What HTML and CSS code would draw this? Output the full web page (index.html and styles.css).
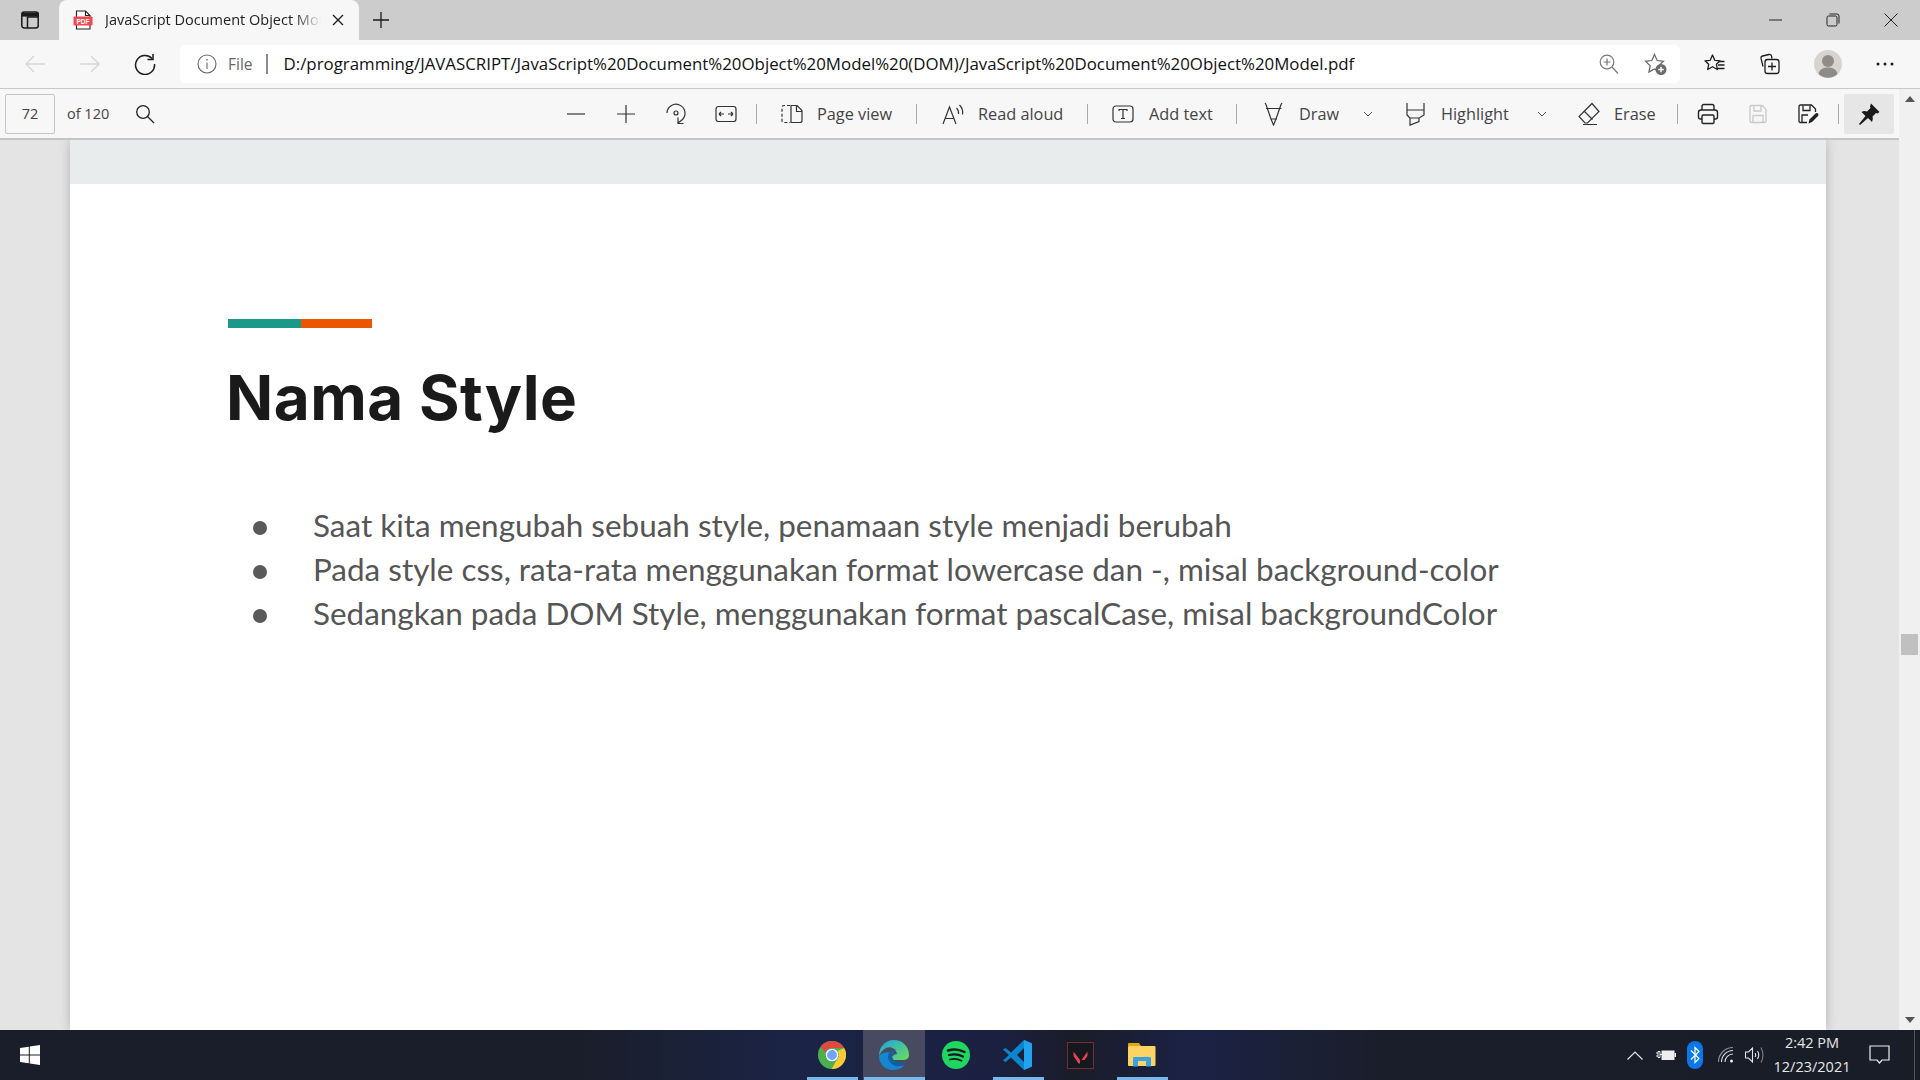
FILE: index.html
```html
<!DOCTYPE html>
<html lang="en">
<head>
<meta charset="utf-8">
<title>JavaScript Document Object Model</title>
<link rel="stylesheet" href="styles.css">
</head>
<body>
<div class="browser">
  <header class="tabstrip">
    <div class="tabs-btn">
      <svg width="20" height="20" viewBox="0 0 20 20" fill="none" stroke="#1a1a1a" stroke-width="1.5"><rect x="1.8" y="2" width="16.4" height="16" rx="2.5"/><path d="M2 3.5h16V7H7.5v11" /><path d="M2 4h16v2.6H2z" fill="#1a1a1a" stroke="none"/></svg>
    </div>
    <div class="tab">
      <svg class="tab-fav" width="20" height="20" viewBox="0 0 20 20"><path d="M3.5 1h9l4.500 4.500V19h-13.500z" fill="#fff" stroke="#222" stroke-width="1.100"/><path d="M12.500 1v4.500H17" fill="none" stroke="#222" stroke-width="1.100"/><rect x="0.500" y="6.500" width="19" height="9" rx="1" fill="#f4474f"/><text class="fav-text" x="10" y="13.500">PDF</text></svg>
      <span class="tab-title">JavaScript Document Object Model</span>
      <svg class="tab-close" width="12" height="12" viewBox="0 0 12 12" stroke="#1a1a1a" stroke-width="1.300"><path d="M1 1l10 10M11 1L1 11"/></svg>
    </div>
    <div class="new-tab">
      <svg width="18" height="18" viewBox="0 0 18 18" stroke="#1a1a1a" stroke-width="1.300"><path d="M9 1v16M1 9h16"/></svg>
    </div>
    <div class="window-controls">
      <button class="win-btn"><svg width="14" height="14" viewBox="0 0 14 14" stroke="#222" stroke-width="1"><path d="M0 7h13"/></svg></button>
      <button class="win-btn"><svg width="14" height="14" viewBox="0 0 14 14" fill="none" stroke="#222" stroke-width="1"><rect x="1" y="3" width="10" height="10" rx="1.500"/><path d="M3.500 1H11q2 0 2 2v7.500"/></svg></button>
      <button class="win-btn"><svg width="14" height="14" viewBox="0 0 14 14" stroke="#222" stroke-width="1"><path d="M.5.500l13 13M13.500.500l-13 13"/></svg></button>
    </div>
  </header>

  <nav class="addressbar">
    <button class="nav-btn nav-back"><svg width="22" height="20" viewBox="0 0 22 20" fill="none" stroke="#d6d6d6" stroke-width="1.500"><path d="M21 10H2M10 2l-8 8 8 8"/></svg></button>
    <button class="nav-btn nav-forward"><svg width="22" height="20" viewBox="0 0 22 20" fill="none" stroke="#d6d6d6" stroke-width="1.500"><path d="M1 10h19M12 2l8 8-8 8"/></svg></button>
    <button class="nav-btn nav-reload"><svg width="22" height="22" viewBox="0 0 22 22" fill="none" stroke="#1c1c1c" stroke-width="1.500"><path d="M18 5.500A9.500 9.500 0 1 0 20.500 11"/><path d="M19 1v5.500h-5.500"/></svg></button>
    <div class="omnibox">
      <svg class="info" width="20" height="20" viewBox="0 0 20 20" fill="none" stroke="#666" stroke-width="1.100"><circle cx="10" cy="10" r="9"/><path d="M10 8.500V15"/><path d="M10 5v1.500" stroke-width="1.400"/></svg>
      <span class="scheme">File</span>
      <span class="scheme-sep"></span>
      <span class="url">D:/programming/JAVASCRIPT/JavaScript%20Document%20Object%20Model%20(DOM)/JavaScript%20Document%20Object%20Model.pdf</span>
      <svg class="omni-zoom" width="20" height="20" viewBox="0 0 20 20" fill="none" stroke="#777" stroke-width="1.200"><circle cx="8" cy="8" r="6.800"/><path d="M13 13l6 6.500M8 4.500v7M4.500 8h7"/></svg>
      <svg class="omni-fav" width="24" height="24" viewBox="0 0 24 24"><path d="M10.500 2.500l2.700 6 6.300.8-4.700 4.400 1.300 6.300-5.600-3.100-5.600 3.100 1.300-6.300L1.500 9.300l6.300-.8z" fill="none" stroke="#666" stroke-width="1.200"/><circle cx="17" cy="17.500" r="5.500" fill="#6b6b6b"/><path d="M17 14.800v5.400M14.300 17.500h5.400" stroke="#fff" stroke-width="1.400"/></svg>
    </div>
    <div class="browser-actions">
      <button class="act-btn"><svg width="22" height="22" viewBox="0 0 22 22" fill="none" stroke="#1c1c1c" stroke-width="1.300"><path d="M8.500 2l2.300 5.300 5.200.5-3.600 3.500 1 5.200-4.900-2.800L3.700 16.500l1-5.200L1 7.800l5.200-.5z" stroke-linejoin="round"/><path d="M15 8.500h5.500M14 12h6.500M14 15.500h6.500"/></svg></button>
      <button class="act-btn"><svg width="22" height="22" viewBox="0 0 22 22" fill="none" stroke="#1c1c1c" stroke-width="1.300"><path d="M4 13.500 2 5.200Q1.700 3.500 3.500 3l6.500-1.500Q12 1.200 12.500 3l.5 2.500"/><rect x="6" y="6.500" width="14" height="14" rx="2.500"/><path d="M13 9.500v8M9 13.500h8"/></svg></button>
      <div class="avatar"><svg width="28" height="28" viewBox="0 0 28 28"><circle cx="14" cy="14" r="14" fill="#d7d4d0"/><circle cx="14" cy="11" r="6" fill="#8f8b87"/><path d="M4.500 24c1-5 5-6.500 9.500-6.500s8.500 1.500 9.500 6.500a14 14 0 0 1-19 0z" fill="#8f8b87"/></svg></div>
      <button class="act-btn act-more"><svg width="18" height="4" viewBox="0 0 18 4" fill="#1c1c1c"><circle cx="2" cy="2" r="1.500"/><circle cx="9" cy="2" r="1.500"/><circle cx="16" cy="2" r="1.500"/></svg></button>
    </div>
  </nav>

  <div class="viewer">
    <div class="viewer-main">
      <div class="pdf-toolbar">
        <div class="page-box">72</div>
        <span class="page-of">of 120</span>
        <button class="ico-btn ico-search"><svg width="20" height="20" viewBox="0 0 20 20" fill="none" stroke="#222" stroke-width="1.300"><circle cx="8" cy="8" r="6.300"/><path d="M12.500 12.500l6.500 6.500"/></svg></button>

        <button class="ico-btn ico-minus"><svg width="20" height="20" viewBox="0 0 20 20" stroke="#333" stroke-width="1.200"><path d="M1 10h18"/></svg></button>
        <button class="ico-btn"><svg width="20" height="20" viewBox="0 0 20 20" stroke="#333" stroke-width="1.200"><path d="M1 10h18M10 1v18"/></svg></button>
        <button class="ico-btn ico-rotate"><svg width="22" height="24" viewBox="0 0 22 24" fill="none" stroke="#333" stroke-width="1.200"><path d="M2 11a9 9 0 1 1 15.500 6.500L13 21"/><path d="M13 15.500V21.500H18.500"/><circle cx="11" cy="11" r="2"/></svg></button>
        <button class="ico-btn"><svg width="22" height="18" viewBox="0 0 22 18" fill="none" stroke="#333" stroke-width="1.200"><rect x="1" y="1.500" width="20" height="15" rx="2.500"/><path d="M4 9h5M4 9l2-2M4 9l2 2M18 9h-5M18 9l-2-2M18 9l-2 2"/></svg></button>
        <span class="sep sep-a"></span>

        <div class="tool tool-page">
          <svg width="22" height="20" viewBox="0 0 22 20" fill="none" stroke="#333" stroke-width="1.200"><path d="M9 1.500H3q-2 0-2 2v13q0 2 2 2h6" stroke-dasharray="3 2"/><path d="M10 1v18M10 1.500h6l5 5v10q0 2-2 2h-9"/><path d="M15.500 1.500v6h5.500"/></svg>
          <span>Page view</span>
        </div>
        <span class="sep"></span>
        <div class="tool tool-read">
          <svg width="24" height="22" viewBox="0 0 24 22" fill="none" stroke="#333" stroke-width="1.200"><path d="M1 21 7.500 4 14 21M3.200 15.500h8.600"/><path d="M14.500 5q2.500 2.500 2 6M17.500 2q4 4 3 9.500"/></svg>
          <span>Read aloud</span>
        </div>
        <span class="sep"></span>
        <div class="tool tool-add">
          <svg width="22" height="20" viewBox="0 0 22 20" fill="none" stroke="#333" stroke-width="1.200"><rect x="1" y="2" width="20" height="16" rx="3"/><path d="M7 7V5.500h8V7M11 5.500v9M9 14.500h4"/></svg>
          <span>Add text</span>
        </div>
        <span class="sep"></span>
        <div class="tool tool-draw">
          <svg width="20" height="24" viewBox="0 0 20 24" fill="none" stroke="#333" stroke-width="1.200"><path d="M1 1l1 1.500 5 14.500 2.500 6 2.500-6L17 2.500 18 1M2 6.500h15.500M7 17h6"/></svg>
          <span>Draw</span>
        </div>
        <svg class="chev" width="10" height="6" viewBox="0 0 10 6" fill="none" stroke="#555"><path d="M1 1l4 4 4-4"/></svg>
        <div class="tool tool-high">
          <svg width="20" height="24" viewBox="0 0 20 24" fill="none" stroke="#333" stroke-width="1.200"><path d="M1 1v7h17V1M1 8v5l3 3v7l9-3.500V16l5-3V8M4 16h9"/></svg>
          <span>Highlight</span>
        </div>
        <svg class="chev" width="10" height="6" viewBox="0 0 10 6" fill="none" stroke="#555"><path d="M1 1l4 4 4-4"/></svg>
        <div class="tool tool-erase">
          <svg width="22" height="24" viewBox="0 0 22 24" fill="none" stroke="#333" stroke-width="1.200"><path d="M14 1.500l7 8L9.500 21H7L1 14.500z"/><path d="M6 9l8.500 8.500M5 22.500h14"/></svg>
          <span>Erase</span>
        </div>
        <span class="sep sep-b"></span>
        <button class="ico-btn"><svg width="22" height="22" viewBox="0 0 22 22" fill="none" stroke="#222" stroke-width="1.400"><path d="M5 7V3.500Q5 1.500 7 1.500h8q2 0 2 2V7"/><path d="M5 16H3.500Q1.500 16 1.500 14V9.500Q1.500 7 4 7h14q2.500 0 2.500 2.500V14q0 2-2 2H17"/><rect x="5" y="12" width="12" height="8.500" rx="1.200"/></svg></button>
        <button class="ico-btn"><svg width="20" height="20" viewBox="0 0 20 20" fill="none" stroke="#c9c9c9" stroke-width="1.300"><path d="M3 1.500h11l4 4V17q0 1.500-1.500 1.500h-13Q2 18.500 2 17V3q0-1.500 1-1.500z"/><path d="M6 2v5h7V2M5 18.500v-7h10v7"/></svg></button>
        <button class="ico-btn"><svg width="22" height="22" viewBox="0 0 22 22" fill="none" stroke="#222" stroke-width="1.300"><path d="M10 19.500H3.500Q2 19.500 2 18V3.500Q2 2 3.500 2h11l4 4v3"/><path d="M6 2.500v5h7v-5M5 19v-7h6"/><path d="M11.500 20.500l1-4 6-6q1.500-1 2.500 0t0 2.500l-6 6z" fill="#222" stroke="none"/></svg></button>
        <span class="sep sep-c"></span>
        <button class="pin-btn"><svg width="22" height="22" viewBox="0 0 22 22" fill="#1a1a1a"><path d="M13 .5l8.500 8.500-2 1.500-1.500-.5-3.500 3.500q1 3-.5 5.500l-4-4-1-1 1 1-8 7-1-1 6.500-8-4-4q2.500-1.500 5.500-.5l3.500-3.500-.5-1.500z"/></svg></button>
      </div>

      <main class="doc">
        <article class="page">
          <div class="page-band"></div>
          <div class="page-body">
            <div class="accent"><span class="accent-teal"></span><span class="accent-orange"></span></div>
            <h1 class="title">Nama Style</h1>
            <ul class="points">
              <li>Saat kita mengubah sebuah style, penamaan style menjadi berubah</li>
              <li>Pada style css, rata-rata menggunakan format lowercase dan -, misal background-color</li>
              <li>Sedangkan pada DOM Style, menggunakan format pascalCase, misal backgroundColor</li>
            </ul>
          </div>
        </article>
      </main>
    </div>
    <aside class="scrollbar">
      <svg class="arrow" width="10" height="6" viewBox="0 0 10 6" fill="#555"><path d="M5 0l5 6H0z"/></svg>
      <div class="thumb"></div>
      <svg class="arrow arrow-down" width="10" height="6" viewBox="0 0 10 6" fill="#555"><path d="M5 6l5-6H0z"/></svg>
    </aside>
  </div>

  <footer class="taskbar">
    <svg class="start" width="20" height="20" viewBox="0 0 20 20" fill="#fff"><path d="M0 3l8.800-1.200v7.700H0zM9.800 1.600 20 0v9.500H9.800zM0 10.500h8.800v7.700L0 17zM9.800 10.500H20V20L9.800 18.400z"/></svg>
    <div class="apps">
      <div class="app app-open">
        <svg width="28" height="28" viewBox="0 0 28 28"><circle cx="14" cy="14" r="14" fill="#4caf50"/><path d="M14 0a14 14 0 0 1 12.100 7H14a7 7 0 0 0-6.600 4.700L2.600 5.500A14 14 0 0 1 14 0z" fill="#dd4b3e"/><path d="M26.100 7A14 14 0 0 1 13.500 28l6.300-10.500A7 7 0 0 0 19.500 10z" fill="#fcc934"/><circle cx="14" cy="14" r="6.300" fill="#fff"/><circle cx="14" cy="14" r="4.900" fill="#6ea6f5"/></svg>
      </div>
      <div class="app app-open app-active">
        <svg width="30" height="30" viewBox="0 0 30 30"><defs><linearGradient id="edgeA" x1="0" y1="0" x2="1" y2="1"><stop offset="0" stop-color="#1aa6e0"/><stop offset="1" stop-color="#6fdc5a"/></linearGradient></defs><path d="M15 0C23 0 30 6 30 15c0 4-3 5-6.500 5H12c0-3 3-6 6-6-1-5-6-8-11-6C3 10 1 13 0 16 0 7 6 0 15 0z" fill="url(#edgeA)"/><path d="M0 16C0 24 6 30 14 30c4 0 8-1 12-5-4 1.500-10 2-13-2-3-4-2-8 2-10-8-2-14 1-15 3z" fill="#1587cf"/><path d="M9 17c0-4 3-8 9-7.500 0 0-4 1-5 4.500-1 5 4 9 9 8.500 2 0 3-.5 4-1-3 5-8 6-12 3.500-3-2-5-5-5-8z" fill="#125fa8"/></svg>
      </div>
      <div class="app">
        <svg width="28" height="28" viewBox="0 0 28 28" fill="none"><circle cx="14" cy="14" r="14" fill="#1ed760"/><path d="M6 9.500q8.500-2.500 16.500 1.500" stroke="#14181f" stroke-width="2.500" stroke-linecap="round"/><path d="M7 14q7.500-2 14 1.500" stroke="#14181f" stroke-width="2.200" stroke-linecap="round"/><path d="M8 18.500q6-1.500 11.500 1.200" stroke="#14181f" stroke-width="1.800" stroke-linecap="round"/></svg>
      </div>
      <div class="app app-open">
        <svg width="30" height="30" viewBox="0 0 30 30"><path d="M21 0l8 3.500v23L21 30 8 17.500 2.500 22 0 20.500 6 15 0 9.500 2.500 8 8 12.500z M21 8l-7 7 7 7z" fill="#0a85d0" fill-rule="evenodd"/><path d="M21 0l8 3.500v23L21 30z" fill="#21a3ee"/></svg>
      </div>
      <div class="app">
        <svg width="27" height="27" viewBox="0 0 27 27"><rect x=".5" y=".5" width="26" height="26" fill="#14181f" stroke="#7c2a38"/><path d="M6.500 9.500l6.500 8.500v3.500h-1.500L6.500 14z M20.500 9.500v4.500l-3 4h-3z" fill="#e74353"/></svg>
      </div>
      <div class="app app-open">
        <svg width="28" height="24" viewBox="0 0 28 24"><path d="M0 1q0-1 1-1h10l2 3h-13z" fill="#e2a80e"/><rect y="3" width="27.500" height="20" rx="1" fill="#fdd462"/><path d="M5 23.500V15q0-1 1-1h16q1 0 1 1v8.500h-5V18H10v5.500z" fill="#39a1e4"/></svg>
      </div>
    </div>
    <div class="tray">
      <svg class="tray-chev" width="16" height="9" viewBox="0 0 16 9" fill="none" stroke="#e6e6e6" stroke-width="1.200"><path d="M.5 8.500 8 1l7.500 7.500"/></svg>
      <svg class="tray-batt" width="20" height="14" viewBox="0 0 20 14"><path d="M0 5h2M0 8h2M2 3.500h2v6H2zM4 6.500h2" fill="none" stroke="#eee"/><rect x="5.500" y="2.500" width="13" height="9.500" fill="#eee"/><rect x="18.500" y="5" width="1.500" height="4" fill="#eee"/></svg>
      <svg class="tray-bt" width="16" height="28" viewBox="0 0 16 28"><rect width="16" height="28" rx="8" fill="#0a78e8"/><path d="M4 9.500l8 8-4 4v-15l4 4-8 8" fill="none" stroke="#fff" stroke-width="1.200"/></svg>
      <svg class="tray-wifi" width="16" height="16" viewBox="0 0 16 16" fill="none" stroke="#ddd" stroke-width="1.100"><path d="M.5 15A14.500 14.500 0 0 1 15 .5" opacity=".6"/><path d="M3.500 15A11.500 11.500 0 0 1 15 3.500"/><path d="M7 15a8 8 0 0 1 8-8"/><circle cx="13.500" cy="14" r="1.500" fill="#eee" stroke="none"/></svg>
      <svg class="tray-vol" width="20" height="18" viewBox="0 0 20 18" fill="none" stroke="#e6e6e6" stroke-width="1.100"><path d="M.5 6v6h3l4 4V2l-4 4zM10 7q1.500 2 0 4M12.500 5q2.500 4 0 8"/><path d="M16 1.500q4 7.500 0 15" opacity=".5"/></svg>
      <div class="clock"><span>2:42 PM</span><span>12/23/2021</span></div>
      <svg class="tray-note" width="21" height="20" viewBox="0 0 21 20" fill="none" stroke="#eee" stroke-width="1.200"><path d="M1 1h19v14h-7l-2.500 3L8 15H1z"/></svg>
      <span class="show-desktop"></span>
    </div>
  </footer>
</div>
</body>
</html>
```

FILE: styles.css
```css
* { box-sizing: border-box; }
html, body { margin: 0; height: 100%; overflow: hidden; }
button { border: 0; background: none; padding: 0; margin: 0; display: flex; align-items: center; justify-content: center; }
svg { display: block; flex: none; }
.browser { width: 1920px; height: 1080px; display: flex; flex-direction: column; font-family: "Open Sans", "Noto Sans", sans-serif; color: #222; }

.tabstrip { height: 40px; background: #cccccc; display: flex; align-items: flex-end; flex: none; }
.tabs-btn { width: 59px; height: 40px; display: flex; align-items: center; justify-content: center; }
.tab { width: 300px; height: 40px; background: #f7f7f7; border-radius: 8px 8px 0 0; display: flex; align-items: center; padding: 0 0 0 14px; }
.tab-fav { margin-right: 12px; }
.fav-text { font-family: "Liberation Sans", sans-serif; font-weight: 700; font-size: 6.5px; fill: #fff; text-anchor: middle; }
.tab-title { width: 216px; font-size: 14.5px; line-height: 20px; white-space: nowrap; overflow: hidden; color: #222; -webkit-mask-image: linear-gradient(to right, #000 88%, transparent 100%); mask-image: linear-gradient(to right, #000 88%, transparent 100%); }
.tab-close { margin-left: 11px; }
.new-tab { width: 42px; height: 40px; display: flex; align-items: center; justify-content: center; margin-left: 1px; }
.window-controls { margin-left: auto; display: flex; height: 40px; }
.win-btn { width: 58px; height: 40px; }
.win-btn:first-child { margin-right: -1px; }

.addressbar { height: 49px; flex: none; background: #f7f7f7; border-bottom: 1px solid #c8c8c8; display: flex; align-items: center; padding-bottom: 1px; }
.nav-btn { width: 55px; height: 38px; }
.nav-back { margin-left: 7px; }
.omnibox { width: 1500px; height: 38px; margin-left: 8px; background: #fff; border-radius: 6px; display: flex; align-items: center; padding: 0 12px 0 17px; }
.scheme { font-size: 15.5px; color: #666; margin-left: 11px; }
.scheme-sep { width: 2px; height: 20px; background: #8a8a8a; margin-left: 13px; }
.url { font-size: 16.85px; color: #111; margin-left: 16px; white-space: nowrap; }
.omni-zoom { margin-left: auto; }
.omni-fav { margin-left: 25px; }
.browser-actions { display: flex; align-items: center; flex: 1; padding-left: 7px; }
.act-btn { width: 55px; height: 38px; }
.avatar { width: 55px; margin-left: 3px; display: flex; justify-content: center; }
.act-more { margin-left: 2px; }

.viewer { flex: 1; display: flex; min-height: 0; }
.viewer-main { flex: 1; min-width: 0; display: flex; flex-direction: column; }
.pdf-toolbar { height: 51px; flex: none; background: #f7f7f7; border-bottom: 2px solid #c4c4c4; display: flex; align-items: center; padding-left: 5px; }
.page-box { width: 50px; height: 40px; border: 1px solid #c4c4c4; border-radius: 2px; display: flex; align-items: center; justify-content: center; font-size: 14.5px; color: #444; }
.page-of { font-size: 14.5px; color: #444; margin-left: 12px; width: 53px; white-space: nowrap; }
.ico-btn { width: 50px; height: 40px; }
.ico-minus { margin-left: 381px; }
.ico-rotate svg { margin-left: -1px; }
.sep { width: 1px; height: 20px; background: #aaa; flex: none; }
.sep-a { margin-left: 5px; }
.tool { display: flex; align-items: center; gap: 14px; font-size: 16.3px; color: #444; height: 40px; white-space: nowrap; }
.tool-page { width: 159px; padding-left: 24px; }
.tool-read { width: 170px; padding-left: 25px; gap: 12px; }
.tool-add { width: 148px; padding-left: 24px; gap: 15px; }
.tool-draw { width: 126px; padding-left: 27px; gap: 15px; }
.tool-high { width: 131px; margin-left: 33px; gap: 15px; }
.tool-erase { width: 79px; margin-left: 31px; }
.sep-b { margin-left: 20px; margin-right: 5px; }
.sep-c { margin-left: 5px; }
.pin-btn { width: 50px; height: 40px; background: #e6e6e6; border-radius: 2px; margin-left: 5px; }

.doc { flex: 1; min-height: 0; background: #e4e4e4; overflow: hidden; padding-left: 70px; }
.page { width: 1756px; height: 100%; background: #fff; box-shadow: 0 0 10px rgba(0,0,0,.22); }
.page-band { height: 44px; background: #e9eced; }
.page-body { padding: 135px 0 0 158px; }
.accent { display: flex; height: 9px; width: 144px; }
.accent-teal { width: 73px; background: #1a9988; }
.accent-orange { flex: 1; background: #eb5600; }
.title { margin: 31px 0 0 -2px; font-family: "Inter", "Lato", sans-serif; font-weight: 700; font-size: 62px; line-height: 78px; letter-spacing: 0.5px; color: #1a1a1a; }
.points { list-style: none; margin: 66px 0 0; padding: 0 0 0 85px; font-family: "Lato", sans-serif; font-size: 31.45px; line-height: 44px; color: #555; }
.points li { position: relative; white-space: nowrap; }
.points li::before { content: ""; position: absolute; left: -60px; top: 18px; width: 14px; height: 14px; border-radius: 50%; background: #5a5a5a; }

.scrollbar { width: 21px; flex: none; background: #f0f0f0; display: flex; flex-direction: column; align-items: center; padding: 7px 0; }
.arrow { flex: none; }
.thumb { width: 17px; height: 21px; background: #c0c0c0; margin-top: 532px; }
.arrow-down { margin-top: auto; }

.taskbar { height: 50px; flex: none; display: flex; align-items: center; color: #eee; background: linear-gradient(to right, #1a1e2a 0, #1a1e2a 30%, #1b2447 42%, #1b2040 52%, #1a1c28 56%, #1b2245 62%, #1a1e2a 72%, #191d28 100%); }
.start { margin-left: 20px; }
.apps { display: flex; height: 50px; margin-left: 761px; }
.app { width: 62px; height: 50px; display: flex; align-items: center; justify-content: center; position: relative; }
.app-active { background: #474a60; }
.app-open::after { content: ""; position: absolute; left: 6px; right: 5px; bottom: 0; height: 3px; background: #76b9ed; }
.app-active::after { left: 1px; right: 0; }
.tray { margin-left: auto; display: flex; align-items: center; height: 50px; }
.tray-chev { margin-right: 13px; }
.tray-batt { margin-right: 11px; }
.tray-bt { margin-right: 15px; }
.tray-wifi { margin-right: 11px; }
.tray-vol { margin-right: 7px; }
.clock { display: flex; flex-direction: column; align-items: center; width: 80px; font-size: 14.5px; line-height: 24px; color: #e6e6e6; }
.tray-note { margin-left: 17px; }
.show-desktop { width: 1px; height: 50px; background: #555; margin-left: 24px; margin-right: 5px; }
```
